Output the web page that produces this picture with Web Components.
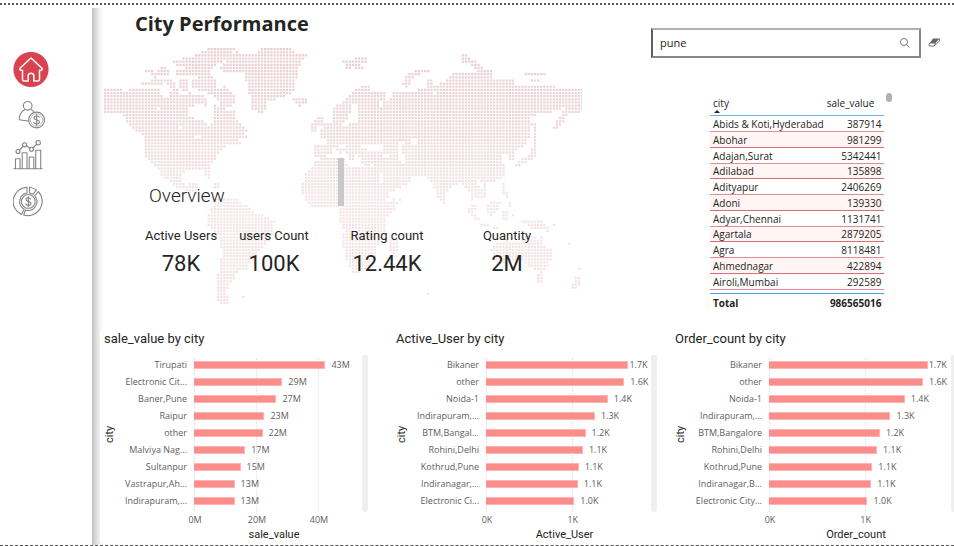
<!DOCTYPE html>
<html lang="en">
<head>
<meta charset="utf-8">
<title>City Performance</title>
<style>
body { margin: 0; background: #fff; color: #252423; font-family: "Open Sans", "Noto Sans", sans-serif; --din: Roboto, "Liberation Sans", sans-serif; }
</style>
</head>
<body>
<city-dashboard></city-dashboard>

<script>
function define(name, html, setup) {
  const template = document.createElement('template');
  template.innerHTML = html;
  customElements.define(name, class extends HTMLElement {
    constructor() {
      super();
      this.attachShadow({ mode: 'open' }).append(template.content.cloneNode(true));
    }
    connectedCallback() {
      if (setup && !this.ready) { this.ready = true; setup(this, this.shadowRoot); }
    }
  });
}

/* Sidebar with four navigation icons */
define('side-nav', `
<style>
:host { display: block; padding-top: 47px; }
nav { display: flex; flex-direction: column; gap: 8px; padding-left: 13px; }
a { display: block; width: 36px; height: 36px; }
svg { display: block; width: 36px; height: 36px; fill: none; stroke: #858585; stroke-width: 1.1; stroke-linejoin: round; stroke-linecap: round; }
</style>
<nav aria-label="Pages">
<a href="#home" aria-label="Home"><svg viewBox="13 52 36 36"><circle cx="31" cy="69.5" r="17.6" fill="#d9434f" stroke="none"/><path d="M31 58 20 68.200Q19.300 69.500 20.800 70.200L22.500 70.200V79Q22.500 81 24 81H28.200V75.500Q28.400 73.200 31 73.200T33.800 75.500V81H38Q39.500 81 39.500 79V70.200H41.200Q42.700 69.500 42 68.200Z" stroke="#fff" stroke-width="1.5"/></svg></a>
<a href="#users" aria-label="Users"><svg viewBox="13 96 36 36"><circle cx="27.700" cy="105.800" r="4.300"/><path d="M24.800 109.400C21 111.500 19.200 115 19.200 119.700C22.200 120.300 25 120.800 28.400 121M31 109.400C32.500 110.200 33.300 111 34 112"/><circle cx="36.600" cy="120" r="7.900"/><circle cx="36.600" cy="120" r="6.300" stroke-width=".5"/><path d="M39.300 117.200C38.500 115.600 34 115.500 34 118C34 120.500 39.500 119.500 39.500 122C39.500 124.500 34.700 124.500 33.800 122.600M36.700 114.600V125.500"/></svg></a>
<a href="#trends" aria-label="Trends"><svg viewBox="13 140 36 36"><path d="M13.800 168.800H42.200M15.500 168.500V158.700H20V168.500M22.200 168.500V152.700H27V168.500M29.200 168.500V157H33.800V168.500M35.700 168.500V150.300H40.700V168.500M19.500 150 23 146.300M26.300 145.700 30 148.300M33 148 36.700 144.200"/><circle cx="18" cy="151.500" r="2"/><circle cx="24.600" cy="144.800" r="2.100"/><circle cx="31.500" cy="149.300" r="2"/><circle cx="38.200" cy="142.700" r="2.200"/></svg></a>
<a href="#revenue" aria-label="Revenue"><svg viewBox="13 184 36 36"><path d="M27 187.200A14.300 14.300 0 0 0 21.500 214.500L24.200 209.200A8.700 8.700 0 0 1 27 193ZM29.500 187.200A14.300 14.300 0 0 1 36.400 189.900L33 194.400A9 9 0 0 0 29.500 193ZM38.300 191.500A14.300 14.300 0 0 1 23.700 215L25.500 210A8.800 8.800 0 0 0 34.800 195.900Z"/><circle cx="28.300" cy="201.400" r="6.900"/><path d="M30.700 199C30 197.300 25.900 197.100 25.900 199.300C25.900 202 31 200.700 31 203.500C31 206 26.500 205.900 25.700 203.900M28.300 196.600V206.500"/></svg></a>
</nav>`);

/* Dotted world map: land outlines sampled on a regular grid of squares */
const LAND = [
  '12,147 62,147 64,158 88,158 88,147 178,147 185,165 206,175 215,150 232,147 240,167 262,160 272,150 285,170 300,160 324,175 324,200 290,190 266,205 266,225 290,235 320,250 335,265 336,190 348,188 352,202 372,205 386,215 400,218 405,240 430,255 440,265 440,280 428,286 446,292 446,298 415,300 425,312 410,314 374,318 370,330 355,345 348,360 326,380 332,412 320,405 314,388 270,385 250,400 246,420 262,440 270,430 296,430 292,450 310,468 338,474 330,480 300,470 270,455 232,445 190,412 172,390 150,360 135,352 135,285 115,275 95,265 70,232 60,220 12,220',
  '325,25 402,25 400,45 375,60 350,75 335,85 334,105 232,108 230,92 262,87 248,76 213,72 213,62 250,62 250,48 290,45 300,35',
  '385,42 415,34 425,45 470,45 478,25 570,25 590,40 628,43 626,50 603,58 607,75 590,85 600,108 585,125 588,150 562,165 530,177 506,184 496,210 482,222 460,212 448,195 450,170 440,150 440,125 432,100 375,97 360,80 380,65',
  '573,177 618,177 618,190 596,202 588,190 573,184',
  '135,90 158,90 158,100 185,82 202,82 208,108 180,106 165,118 150,100 135,100',
  '128,122 195,120 178,140 126,138', '232,112 268,112 262,152 232,147',
  '198,120 222,120 225,140 205,142', '275,115 330,105 350,125 350,145 378,135 402,165 410,190 398,198 380,190 365,170 340,170 330,160 315,158 300,150 275,147',
  '350,175 380,178 400,200 360,202', '385,210 402,210 400,235 385,235',
  '305,385 332,385 332,415 318,412', '335,425 352,425 354,432 392,433 392,440 345,442',
  '335,482 360,470 410,472 412,487 440,490 460,515 500,530 525,540 522,565 508,602 480,630 470,655 440,678 440,688 418,690 405,715 388,735 378,755 392,792 362,790 345,770 345,740 355,700 365,650 362,600 340,575 325,555 325,520 337,500',
  '422,765 430,765 430,774 422,774',
  '640,358 732,352 745,376 790,380 798,374 838,378 842,405 855,440 865,465 885,482 903,476 898,490 870,520 855,535 855,585 835,615 832,640 815,668 795,690 770,702 755,695 740,660 726,610 732,570 715,530 712,502 640,505 615,480 603,455 612,410 640,380',
  '868,600 895,600 893,630 882,640 868,632',
  '640,318 697,318 692,345 668,350 642,350',
  '632,250 650,235 658,225 673,225 675,252 650,262 645,278 630,278',
  '660,270 675,252 695,250 705,240 695,220 695,205 720,190 735,180 750,165 765,150 785,140 810,140 812,150 855,158 855,178 845,190 870,175 880,165 878,150 900,150 905,158 945,152 965,145 985,138 982,120 1000,120 1003,132 1030,130 1045,110 1065,98 1128,98 1130,90 1180,90 1180,115 1244,120 1248,135 1290,132 1300,138 1370,140 1400,148 1447,147 1447,212 1420,222 1400,225 1395,245 1380,260 1365,278 1360,262 1365,245 1385,225 1360,213 1345,222 1310,222 1290,235 1292,285 1280,310 1265,325 1245,330 1240,345 1250,362 1230,362 1225,345 1210,338 1200,350 1215,380 1215,400 1205,420 1180,425 1160,427 1160,475 1145,470 1125,470 1125,490 1138,500 1120,522 1108,500 1120,490 1112,465 1100,445 1080,425 1060,440 1035,462 1040,492 1028,495 1010,465 1000,435 985,420 975,410 940,408 925,430 905,445 862,462 850,440 840,412 825,378 815,370 790,372 780,355 765,340 760,362 748,362 740,340 735,330 720,345 700,325 680,315 678,295 660,290',
  '1295,252 1312,252 1312,325 1297,325 1302,285', '1293,325 1306,325 1306,355 1275,368 1252,382 1245,370 1270,352 1293,345',
  '905,122 918,122 918,105 945,90 990,90 990,98 945,105 930,120 928,142 915,142 915,132 905,132',
  '725,62 765,62 760,52 800,52 798,65 785,72 790,88 770,88 765,80 745,88 735,80',
  '1078,52 1090,42 1105,42 1110,58 1135,65 1140,80 1160,90 1120,90 1115,70 1085,65',
  '1276,98 1342,98 1342,106 1276,106', '1295,120 1316,120 1316,130 1295,130',
  '1205,430 1218,430 1218,455 1228,470 1212,470 1205,455', '1218,480 1236,480 1236,500 1226,498',
  '1162,495 1190,478 1205,485 1190,522 1170,530 1160,515', '1095,498 1115,508 1140,535 1140,545 1125,545 1108,520',
  '1143,548 1172,548 1172,556 1143,556', '1180,556 1195,556 1195,564 1180,564', '1205,510 1230,510 1225,522 1222,540 1205,538',
  '1237,520 1246,520 1246,535 1237,535', '1262,535 1290,540 1330,540 1330,552 1350,562 1352,582 1330,570 1300,572 1285,555 1262,550',
  '1170,625 1195,608 1225,600 1250,610 1275,590 1310,592 1315,600 1325,590 1330,610 1355,630 1357,655 1345,685 1325,700 1305,690 1285,680 1270,665 1240,665 1200,675 1185,672 1180,650',
  '1314,702 1333,702 1333,725 1314,725', '1437,680 1447,680 1447,690 1437,690', '1430,712 1447,712 1445,725 1430,744 1410,744 1410,735',
  '1400,605 1410,605 1410,612 1400,612', '1410,612 1419,612 1419,620 1410,620', '1362,546 1370,546 1370,555 1362,555', '1381,556 1390,556 1390,564 1381,564', '982,755 990,755 990,764 982,764'
];
const WATER = [
  '760,188 772,188 770,220 778,248 750,248 735,262 728,252 755,215', '778,318 795,310 812,312 858,320 856,328 802,330',
  '896,305 914,305 905,330 916,352 918,375 902,370 896,345', '930,300 954,298 954,315 935,317', '715,318 735,312 740,328 722,328',
  '838,185 850,185 850,200 838,200', '1000,155 1010,155 1010,164 1000,164', '170,205 182,205 182,212 170,212',
  '285,290 305,290 305,298 285,298', '235,262 248,262 248,268 235,268', '905,450 870,490 860,480 870,462',
  '1130,420 1150,425 1152,450 1140,450', '1395,205 1380,222 1360,216 1385,205', '840,390 852,430 846,434 836,395', '850,345 870,345 870,350 850,350'
];
define('world-map', `
<style>
:host { display: block; }
svg { display: block; width: 100%; height: auto; }
</style>
<svg viewBox="12 24 1435 768" role="img" aria-label="World map">
<defs><linearGradient id="fade" gradientUnits="userSpaceOnUse" x1="0" y1="24" x2="0" y2="792">
<stop offset="0" stop-color="#e9ccd2"/><stop offset=".3" stop-color="#ecd6da"/><stop offset=".6" stop-color="#f3e5e7"/><stop offset="1" stop-color="#f4dfe2"/></linearGradient></defs>
<path fill="url(#fade)"/>
</svg>`, (host, root) => {
  const parse = list => list.map(s => s.split(' ').map(p => p.split(',').map(Number)));
  const inside = (poly, x, y) => {
    let hit = false;
    for (let i = 0, j = poly.length - 1; i < poly.length; j = i++) {
      const [ax, ay] = poly[i], [bx, by] = poly[j];
      if ((ay > y) !== (by > y) && x < (bx - ax) * (y - ay) / (by - ay) + ax) hit = !hit;
    }
    return hit;
  };
  const land = parse(LAND), water = parse(WATER), pitch = 9.42;
  let d = '';
  for (let y = 24; y < 792; y += pitch)
    for (let x = 12; x < 1446; x += pitch) {
      const cx = x + 3, cy = y + 3;
      if (land.some(p => inside(p, cx, cy)) && !water.some(p => inside(p, cx, cy)))
        d += `M${x.toFixed(1)} ${y.toFixed(1)}h6.600v6.600h-6.600z`;
    }
  root.querySelector('path').setAttribute('d', d);
});

define('kpi-card', `
<style>
:host { display: flex; flex-direction: column; align-items: center; gap: 8px; font-family: var(--din); white-space: nowrap; }
.label { font-size: 13px; line-height: 16px; }
.value { font-size: 22px; line-height: 24px; }
</style>
<div class="label"><slot name="label"></slot></div>
<div class="value"><slot></slot></div>`);

define('city-search', `
<style>
:host { display: flex; align-items: center; gap: 7px; }
label { flex: 1; display: flex; align-items: center; box-sizing: border-box; height: 30px; border: 2px solid; border-color: #b3b0ad #8a8886 #8a8886 #605e5c; padding: 0 8px 0 7px; background: #fff; }
input { flex: 1; min-width: 0; border: 0; outline: 0; padding: 0; background: none; color: #252423; font: 11px/16px "Open Sans", sans-serif; }
button { border: 0; padding: 0; background: none; width: 13px; height: 12px; }
svg { display: block; }
</style>
<label><input type="text" value="pune" aria-label="Search city">
<svg width="12" height="12" viewBox="0 0 12 12" fill="none" stroke="#777" stroke-width="1"><circle cx="5" cy="5" r="3.500"/><path d="M7.500 7.500 10.500 10.500"/></svg></label>
<button type="button" aria-label="Clear search"><svg width="13" height="12" viewBox="0 0 13 12"><path d="M5 1.500H11.500L7.500 6H1.800Z" fill="#666"/><path d="M1.800 6H7.500L6 9H1.200Q.7 8 1.800 6ZM11.500 1.500V4L6 9" fill="none" stroke="#666" stroke-width=".9"/></svg></button>`);

const ROWS = [['Abids & Koti,Hyderabad', 387914], ['Abohar', 981299], ['Adajan,Surat', 5342441], ['Adilabad', 135898], ['Adityapur', 2406269], ['Adoni', 139330], ['Adyar,Chennai', 1131741], ['Agartala', 2879205], ['Agra', 8118481], ['Ahmednagar', 422894], ['Airoli,Mumbai', 292589]];
define('sales-table', `
<style>
:host { display: flex; align-items: flex-start; gap: 2px; }
table { flex: 1; border-collapse: separate; border-spacing: 0; font-size: 10px; line-height: 14px; white-space: nowrap; }
th, td { padding: 0 3px; box-sizing: border-box; text-align: left; font-weight: 400; vertical-align: middle; }
th + th, td + td { text-align: right; padding-left: 0; }
thead th { height: 20px; vertical-align: top; border-bottom: 1px solid #6fb0ee; }
thead th + th { padding-right: 10px; }
.sort { display: block; width: 0; border: 3px solid transparent; border-top: 0; border-bottom-color: #252423; margin-left: 1px; }
tbody td { height: 16px; border-bottom: 1px solid #e58b93; }
tbody tr:nth-child(4n) td { height: 15px; line-height: 13px; }
tbody tr:nth-child(even) td { background: #fff5f4; border-bottom-color: #dd6b78; }
tfoot td { height: 18px; font-weight: 700; border-top: 1px solid #4a9fec; }
tfoot tr.gap td { height: 3px; border: 0; }
.thumb { width: 6px; height: 9px; border-radius: 3px; background: #b3b0ad; margin: -3px -8px 0 0; }
</style>
<table>
<thead><tr><th scope="col">city<span class="sort"></span></th><th scope="col">sale_value</th></tr></thead>
<tbody></tbody>
<tfoot><tr class="gap"><td colspan="2"></td></tr><tr><td>Total</td><td>986565016</td></tr></tfoot>
</table>
<div class="thumb"></div>`, (host, root) => {
  const body = root.querySelector('tbody');
  for (const [city, value] of ROWS) {
    const row = body.insertRow();
    row.insertCell().textContent = city;
    row.insertCell().textContent = value;
  }
});

/* One category: name, bar and value */
define('bar-row', `
<style>
:host { display: grid; grid-template-columns: var(--names) 1fr; column-gap: 7px; align-items: center; height: 17px; font-size: 9px; line-height: 12px; color: #605e5c; white-space: nowrap; }
.name { text-align: right; justify-self: end; }
.track { display: flex; align-items: center; gap: 6px; min-width: 0; }
:host([tight]) .track { gap: 1px; }
.bar { flex: none; box-sizing: border-box; width: calc(var(--value) / var(--max) * 100%); height: 8px; background: #fd8d8b; border: 1px solid #feb4b2; border-left: 0; }
</style>
<div class="name"><slot></slot></div>
<div class="track"><div class="bar"></div><span class="value"></span></div>`, (host, root) => {
  host.style.setProperty('--value', host.getAttribute('value'));
  root.querySelector('.value').textContent = host.getAttribute('text');
});

define('bar-chart', `
<style>
:host { display: block; box-sizing: border-box; background: #fff; padding-left: 4px; color: #252423; }
h2 { margin: 0; font: 400 13px/16px var(--din); }
.area { display: grid; grid-template-columns: 12px 1fr 6px; column-gap: 0; margin-top: 8px; }
.ylabel { writing-mode: vertical-rl; transform: rotate(180deg); text-align: center; font: 11px/12px var(--din); padding-bottom: 2px; }
.body { position: relative; padding: 1px 8px 3px 0; }
.rows { position: relative; }
.lines { position: absolute; top: 3px; bottom: 0; left: calc(var(--names) + 7px); right: 8px; }
.lines i { position: absolute; top: 0; bottom: 0; left: calc(var(--at) / var(--max) * 100%); border-left: 1px dotted #dedede; }
.lines span { position: absolute; top: 100%; left: 50%; transform: translateX(-50%); font: normal 9px/16px "Open Sans", sans-serif; color: #605e5c; }
.bar { background: #efefef; border-radius: 0 0 3px 3px; }
.xlabel { margin: 16px 14px 0 calc(var(--names) + 19px); text-align: center; font: 11px/14px var(--din); }
</style>
<h2><slot name="title"></slot></h2>
<div class="area"><div class="ylabel">city</div>
<div class="body"><div class="lines"></div><div class="rows"><slot></slot></div></div><div class="bar"></div></div>
<div class="xlabel"></div>`, (host, root) => {
  host.style.setProperty('--max', host.getAttribute('max'));
  root.querySelector('.xlabel').textContent = host.getAttribute('measure');
  const unit = host.getAttribute('unit');
  for (const tick of host.getAttribute('ticks').split(' ')) {
    const line = document.createElement('i');
    line.style.setProperty('--at', tick);
    const text = document.createElement('span');
    text.textContent = tick + unit;
    line.append(text);
    root.querySelector('.lines').append(line);
  }
});

define('city-dashboard', `
<style>
:host { display: grid; grid-template-columns: 92px 1fr; grid-template-rows: auto 1fr auto; box-sizing: border-box; min-height: 100vh; padding-top: 3px; }
.edge { grid-column: 1 / -1; height: 0; border-top: 2px dotted #5c5c5c; }
.foot { border-top: 1px dashed #555; }
main { display: flex; flex-direction: column; min-width: 0; margin-top: 3px; background: linear-gradient(90deg, #c2c2c2, #dcdcdc 4px, #f8f8f8 9px, #fff 12px); }
.top { display: grid; grid-template-columns: 559fr 303fr; min-height: 323px; }
.top > * { min-width: 0; }
.hero { position: relative; padding-left: 43px; }
h1 { margin: 0; position: relative; font-size: 20px; line-height: 32px; font-weight: 700; }
world-map { position: absolute; left: 12px; top: 40px; width: 478px; }
.pin { position: absolute; left: 246px; top: 150px; width: 6px; height: 48px; background: #c8c8c8; }
h2 { margin: 142px 0 0 14px; position: relative; font: 300 19px/28px var(--din); }
.kpis { position: relative; display: grid; grid-template-columns: 92px 94px 132px 108px; margin-top: 18px; }
.side { padding: 20px 13px 0 0; }
sales-table { margin: 38px 57px 0 59px; }
.charts { display: grid; grid-template-columns: 292fr 279fr 283fr; margin-left: 8px; background: #fff; overflow: hidden; }
bar-chart { --names: 71px; margin-right: 24px; }
bar-chart:nth-child(2) { margin-right: 14px; }
bar-chart:nth-child(3) { --names: 75px; margin-right: -3px; }
</style>
<div class="edge"></div>
<side-nav></side-nav>
<main>
<section class="top">
<div class="hero">
<world-map></world-map><div class="pin"></div>
<h1>City Performance</h1>
<h2>Overview</h2>
<div class="kpis">
<kpi-card><span slot="label">Active Users</span>78K</kpi-card>
<kpi-card><span slot="label">users Count</span>100K</kpi-card>
<kpi-card><span slot="label">Rating count</span>12.44K</kpi-card>
<kpi-card><span slot="label">Quantity</span>2M</kpi-card>
</div>
</div>
<div class="side"><city-search></city-search><sales-table></sales-table></div>
</section>
<section class="charts">
<bar-chart max="51.6" ticks="0 20 40" unit="M" measure="sale_value"><span slot="title">sale_value by city</span>
<bar-row value="42.4" text="43M">Tirupati</bar-row><bar-row value="28.5" text="29M">Electronic Cit...</bar-row><bar-row value="26.6" text="27M">Baner,Pune</bar-row><bar-row value="22.7" text="23M">Raipur</bar-row><bar-row value="22.1" text="22M">other</bar-row><bar-row value="16.5" text="17M">Malviya Nag...</bar-row><bar-row value="15" text="15M">Sultanpur</bar-row><bar-row value="13.1" text="13M">Vastrapur,Ah...</bar-row><bar-row value="13.1" text="13M">Indirapuram,...</bar-row>
</bar-chart>
<bar-chart max="1.83" ticks="0 1" unit="K" measure="Active_User"><span slot="title">Active_User by city</span>
<bar-row tight value="1.66" text="1.7K">Bikaner</bar-row><bar-row value="1.61" text="1.6K">other</bar-row><bar-row value="1.42" text="1.4K">Noida-1</bar-row><bar-row value="1.27" text="1.3K">Indirapuram,...</bar-row><bar-row value="1.16" text="1.2K">BTM,Bangal...</bar-row><bar-row value="1.13" text="1.1K">Rohini,Delhi</bar-row><bar-row value="1.08" text="1.1K">Kothrud,Pune</bar-row><bar-row value="1.07" text="1.1K">Indiranagar,...</bar-row><bar-row value="1.03" text="1.0K">Electronic Ci...</bar-row>
</bar-chart>
<bar-chart max="1.82" ticks="0 1" unit="K" measure="Order_count"><span slot="title">Order_count by city</span>
<bar-row tight value="1.66" text="1.7K">Bikaner</bar-row><bar-row value="1.61" text="1.6K">other</bar-row><bar-row value="1.42" text="1.4K">Noida-1</bar-row><bar-row value="1.27" text="1.3K">Indirapuram,...</bar-row><bar-row value="1.16" text="1.2K">BTM,Bangalore</bar-row><bar-row value="1.13" text="1.1K">Rohini,Delhi</bar-row><bar-row value="1.08" text="1.1K">Kothrud,Pune</bar-row><bar-row value="1.07" text="1.1K">Indiranagar,B...</bar-row><bar-row value="1.03" text="1.0K">Electronic City...</bar-row>
</bar-chart>
</section>
</main>
<div class="edge foot"></div>`);
</script>
</body>
</html>
